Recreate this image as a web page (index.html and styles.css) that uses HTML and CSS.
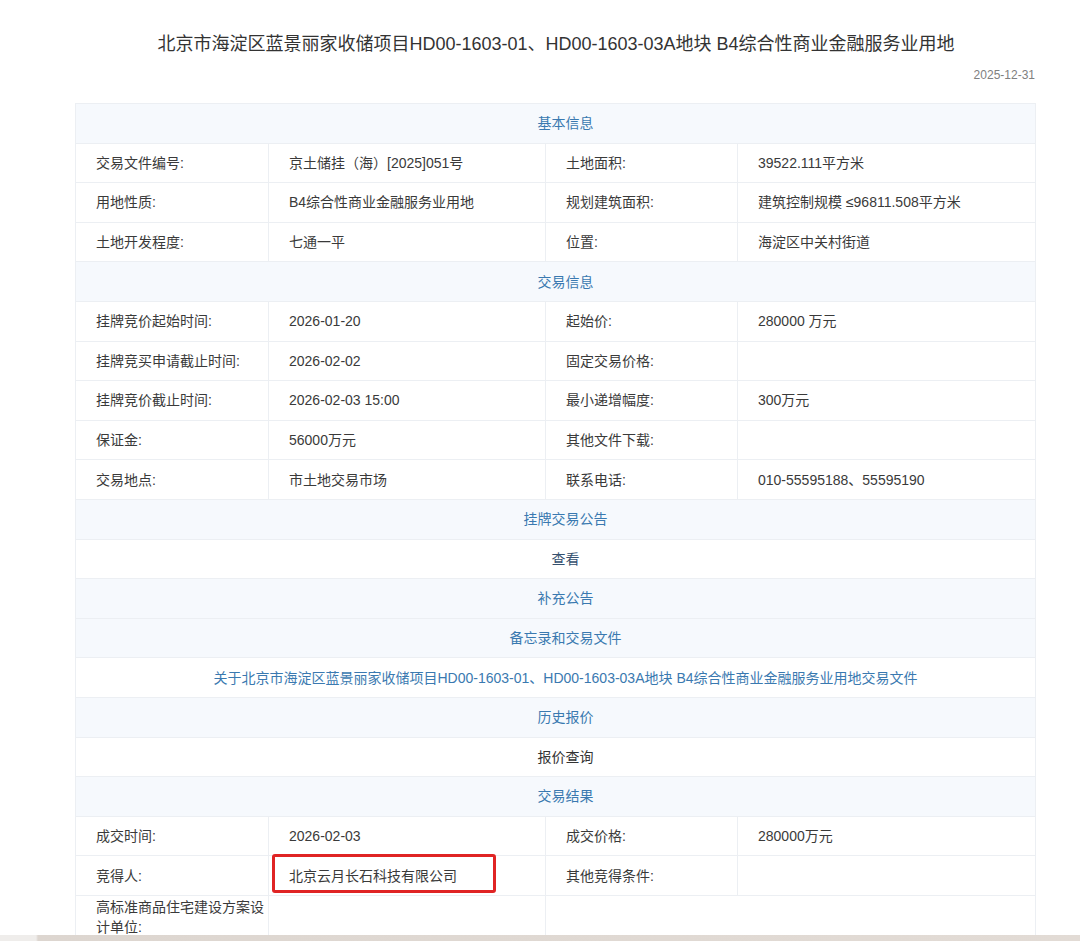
FILE: index.html
```html
<!DOCTYPE html>
<html lang="zh-CN">
<head>
<meta charset="utf-8">
<title>北京市海淀区蓝景丽家收储项目</title>
<link rel="stylesheet" href="styles.css">
</head>
<body>
<div class="page">
  <h1 class="title">北京市海淀区蓝景丽家收储项目HD00-1603-01、HD00-1603-03A地块 B4综合性商业金融服务业用地</h1>
  <div class="date">2025-12-31</div>
  <table class="info">
    <colgroup>
      <col class="c1"><col class="c2"><col class="c3"><col class="c4">
    </colgroup>
    <tbody>
      <tr class="sec"><td colspan="4">基本信息</td></tr>
      <tr><td>交易文件编号:</td><td>京土储挂（海）[2025]051号</td><td>土地面积:</td><td>39522.111平方米</td></tr>
      <tr><td>用地性质:</td><td>B4综合性商业金融服务业用地</td><td>规划建筑面积:</td><td>建筑控制规模 ≤96811.508平方米</td></tr>
      <tr><td>土地开发程度:</td><td>七通一平</td><td>位置:</td><td>海淀区中关村街道</td></tr>
      <tr class="sec"><td colspan="4">交易信息</td></tr>
      <tr><td>挂牌竞价起始时间:</td><td>2026-01-20</td><td>起始价:</td><td>280000 万元</td></tr>
      <tr><td>挂牌竞买申请截止时间:</td><td>2026-02-02</td><td>固定交易价格:</td><td></td></tr>
      <tr><td>挂牌竞价截止时间:</td><td>2026-02-03 15:00</td><td>最小递增幅度:</td><td>300万元</td></tr>
      <tr><td>保证金:</td><td>56000万元</td><td>其他文件下载:</td><td></td></tr>
      <tr><td>交易地点:</td><td>市土地交易市场</td><td>联系电话:</td><td>010-55595188、55595190</td></tr>
      <tr class="sec"><td colspan="4">挂牌交易公告</td></tr>
      <tr class="plain"><td colspan="4" class="view">查看</td></tr>
      <tr class="sec"><td colspan="4">补充公告</td></tr>
      <tr class="sec"><td colspan="4">备忘录和交易文件</td></tr>
      <tr class="plain"><td colspan="4" class="link">关于北京市海淀区蓝景丽家收储项目HD00-1603-01、HD00-1603-03A地块 B4综合性商业金融服务业用地交易文件</td></tr>
      <tr class="sec"><td colspan="4">历史报价</td></tr>
      <tr class="plain"><td colspan="4" class="query">报价查询</td></tr>
      <tr class="sec"><td colspan="4">交易结果</td></tr>
      <tr><td>成交时间:</td><td>2026-02-03</td><td>成交价格:</td><td>280000万元</td></tr>
      <tr><td>竞得人:</td><td class="winner"><span class="mark"></span>北京云月长石科技有限公司</td><td>其他竞得条件:</td><td></td></tr>
      <tr class="tall"><td class="wrap">高标准商品住宅建设方案设计单位:</td><td></td><td colspan="2"></td></tr>
    </tbody>
  </table>
</div>
<div class="strip"></div>
</body>
</html>
```

FILE: styles.css
```css
html, body {
  margin: 0;
  padding: 0;
  background: #ffffff;
}
body {
  font-family: "Liberation Sans", "Noto Sans CJK SC", sans-serif;
  color: #333333;
  height: 941px;
  overflow: hidden;
}
.page {
  width: 960px;
  margin-left: 75px;
}
.title {
  margin: 0;
  padding-top: 32px;
  font-size: 18px;
  font-weight: normal;
  line-height: 24px;
  text-align: center;
  color: #333333;
  padding-left: 2px;
}
.date {
  margin-top: 11px;
  font-size: 12px;
  line-height: 16px;
  color: #808080;
  text-align: right;
}
.info {
  margin-top: 20px;
  width: 960px;
  table-layout: fixed;
  border-collapse: collapse;
  font-size: 14px;
  border: 1px solid #eef0f4;
}
.c1 { width: 193px; }
.c2 { width: 277px; }
.c3 { width: 192px; }
.c4 { width: 298px; }
.info td {
  height: 39.6px;
  padding: 0 0 0 20px;
  border: 1px solid #eceff3;
  color: #3a3a3a;
  line-height: 20px;
  box-sizing: border-box;
  vertical-align: middle;
}
.info tr.sec td {
  background: #f6f9fd;
  color: #3a79b0;
  text-align: center;
}
.info tr.plain td {
  text-align: center;
}
.info td.view { color: #34506e; }
.info td.link { color: #3a79b0; }
.info td.query { color: #333333; }
.info td.winner {
  position: relative;
}
.mark {
  position: absolute;
  left: 3px;
  top: -2px;
  width: 218px;
  height: 33px;
  border: 3px solid #e02424;
  border-radius: 3px;
}
.info tr.tall td {
  height: 56px;
  vertical-align: top;
  padding-top: 1px;
  line-height: 20px;
}
.info td.wrap {
  padding-right: 0;
}
.strip {
  position: fixed;
  left: 0;
  right: 0;
  bottom: 0;
  height: 6px;
  background: linear-gradient(to right, #efedeb 0, #efedeb 36px, #ddd6d0 38px, #e2dbd5 100%);
}
```
